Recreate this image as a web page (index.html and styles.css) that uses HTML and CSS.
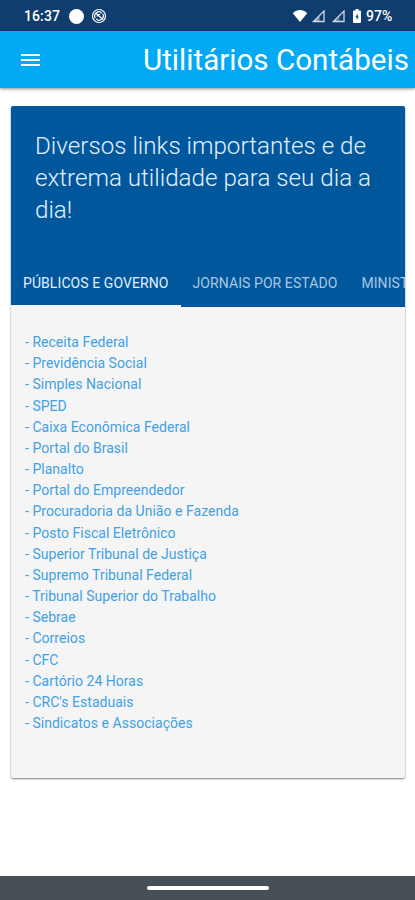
FILE: index.html
```html
<!DOCTYPE html>
<html lang="pt-BR">
<head>
  <meta charset="UTF-8" />
  <meta name="viewport" content="width=device-width, initial-scale=1.0"/>
  <title>Utilitários Contábeis</title>
  <link rel="stylesheet" href="styles.css">
</head>
<body>

<div class="status-bar">
  <span class="clock">16:37</span>
  <span class="dot"></span>
  <svg class="sync" viewBox="0 0 16 16" width="16" height="16" fill="none" stroke="#fff">
    <circle cx="8" cy="8" r="6.5" stroke-width="1.2"/>
    <path d="M4.200 10.200a4.300 4.300 0 0 1 6.800-5.100M11.800 5.800a4.300 4.300 0 0 1-6.800 5.100M4.500 5l7.500 6.500M6.300 8.600a2 2 0 0 1 3-2" stroke-width="1.200"/>
  </svg>
  <span class="spacer"></span>
  <svg class="wifi" viewBox="0 0 16 14" width="16" height="14" fill="#fff">
    <path d="M.8 4.2C5-.1 11-.1 15.200 4.200L8 13z"/>
  </svg>
  <svg class="signal" viewBox="0 0 14 14" width="14" height="14">
    <path d="M1.500 12.500L12 2v10.500z" fill="none" stroke="#fff" stroke-opacity=".8" stroke-width="1.300"/>
    <path d="M2 12.500l5.500-5.500v5.500z" fill="#fff" fill-opacity=".45"/>
  </svg>
  <svg class="signal" viewBox="0 0 14 14" width="14" height="14">
    <path d="M1.500 12.500L12 2v10.500z" fill="none" stroke="#fff" stroke-opacity=".8" stroke-width="1.300"/>
    <path d="M2 12.500l5.500-5.500v5.500z" fill="#fff" fill-opacity=".3"/>
  </svg>
  <svg class="battery" viewBox="0 0 8 14" width="8" height="14">
    <path d="M2.500 0h3v1.500H7a1 1 0 0 1 1 1V13a1 1 0 0 1-1 1H1a1 1 0 0 1-1-1V2.500a1 1 0 0 1 1-1h1.500z" fill="#fff"/>
    <path d="M4.600 4.500L2.300 8.300h1.400V11L5.700 7.300H4.600z" fill="#103c6e"/>
  </svg>
  <span class="percent">97%</span>
</div>

<header>
  <button class="menu-btn" aria-label="Menu">
    <span></span>
    <span></span>
    <span></span>
  </button>
  <h1>Utilitários Contábeis</h1>
</header>

<div class="card">
  <div class="card-top">
    <p>Diversos links importantes e de extrema utilidade para seu dia a dia!</p>
    <div class="tabs">
      <a class="tab active">PÚBLICOS E GOVERNO</a>
      <a class="tab">JORNAIS POR ESTADO</a>
      <a class="tab">MINISTÉRIOS</a>
    </div>
  </div>
  <div class="links">
    <a>- Receita Federal</a>
    <a>- Previdência Social</a>
    <a>- Simples Nacional</a>
    <a>- SPED</a>
    <a>- Caixa Econômica Federal</a>
    <a>- Portal do Brasil</a>
    <a>- Planalto</a>
    <a>- Portal do Empreendedor</a>
    <a>- Procuradoria da União e Fazenda</a>
    <a>- Posto Fiscal Eletrônico</a>
    <a>- Superior Tribunal de Justiça</a>
    <a>- Supremo Tribunal Federal</a>
    <a>- Tribunal Superior do Trabalho</a>
    <a>- Sebrae</a>
    <a>- Correios</a>
    <a>- CFC</a>
    <a>- Cartório 24 Horas</a>
    <a>- CRC's Estaduais</a>
    <a>- Sindicatos e Associações</a>
  </div>
</div>

<div class="nav-bar">
  <span class="handle"></span>
</div>

</body>
</html>
```
FILE: styles.css
```css
* {
  box-sizing: border-box;
}
body {
  font-family: Roboto, sans-serif;
  background: #fff;
  margin: 0;
  height: 900px;
  display: flex;
  flex-direction: column;
  overflow: hidden;
}
.status-bar {
  height: 31px;
  flex-shrink: 0;
  display: flex;
  align-items: center;
  padding: 1px 22px 0 24px;
  background-color: #103c6e;
  color: #fff;
  font-size: 14px;
  font-weight: 500;
}
.clock {
  width: 36px;
  letter-spacing: 0.1px;
}
.dot {
  width: 15px;
  height: 15px;
  margin-left: 9px;
  border-radius: 50%;
  background: #fff;
}
.sync {
  margin-left: 7px;
}
.spacer {
  flex: 1;
}
.signal {
  margin-left: 6px;
}
.wifi + .signal {
  margin-left: 4px;
}
.battery {
  margin-left: 7px;
}
.percent {
  width: 27px;
  margin-left: 5px;
  white-space: nowrap;
}
header {
  height: 57px;
  flex-shrink: 0;
  display: flex;
  align-items: center;
  justify-content: space-between;
  padding: 0 6px 0 21px;
  background-color: #03a9f4;
  color: #fff;
  box-shadow: 0 1px 3px rgba(0,0,0,0.45);
}
.menu-btn {
  width: 19px;
  padding: 0;
  border: none;
  background: none;
  display: flex;
  flex-direction: column;
  gap: 3px;
  cursor: pointer;
}
.menu-btn span {
  height: 2px;
  background: #fff;
}
h1 {
  margin: 0;
  font-size: 29.6px;
  font-weight: 400;
  white-space: nowrap;
}
.card {
  height: 672px;
  flex-shrink: 0;
  margin: 18px 10px 0 11px;
  background: #f5f5f5;
  border-radius: 2px;
  overflow: hidden;
  box-shadow: 0 1px 2px rgba(0,0,0,0.5);
}
.card-top {
  height: 201px;
  display: flex;
  flex-direction: column;
  justify-content: space-between;
  background-color: #01579b;
  color: #e3effc;
}
.card-top p {
  margin: 0;
  padding: 23.5px 24px 0;
  font-size: 24.2px;
  font-weight: 300;
  line-height: 32.3px;
}
.tabs {
  height: 48px;
  display: flex;
  overflow: hidden;
}
.tab {
  flex-shrink: 0;
  padding: 0 12px;
  line-height: 49px;
  font-size: 14px;
  letter-spacing: 0.08px;
  color: #a9c7e4;
  white-space: nowrap;
}
.tab.active {
  color: #e3effc;
  border-bottom: 2px solid #f5f5f5;
}
.links {
  padding: 25px 14px;
}
.links a {
  display: block;
  font-size: 14px;
  letter-spacing: 0.03px;
  line-height: 21.17px;
  color: #42a1e4;
}
.nav-bar {
  height: 24px;
  flex-shrink: 0;
  margin-top: auto;
  display: flex;
  justify-content: center;
  align-items: center;
  background: #465056;
}
.handle {
  width: 122px;
  height: 4px;
  border-radius: 2px;
  background: #fff;
}
```
